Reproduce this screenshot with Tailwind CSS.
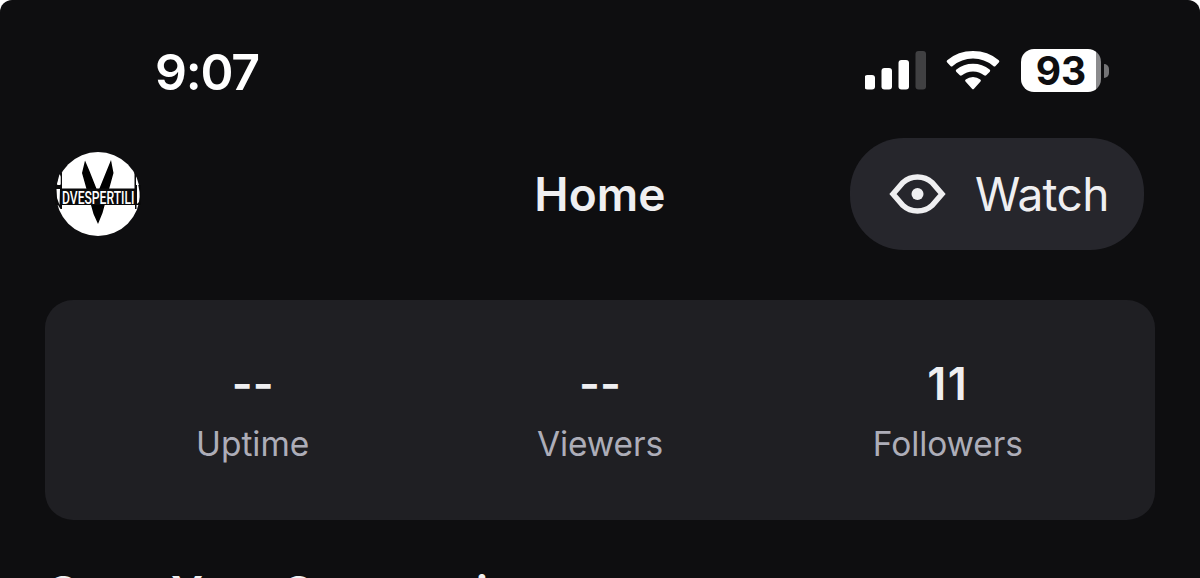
<!DOCTYPE html>
<html lang="en">
<head>
  <meta charset="UTF-8" />
  <meta name="viewport" content="width=device-width, initial-scale=1.0"/>
  <title>Home</title>
  <script src="https://cdn.jsdelivr.net/npm/@tailwindcss/browser@4"></script>
</head>
<body class="bg-white font-['Inter',sans-serif]">
  <div class="w-[1200px] h-[578px] overflow-hidden rounded-t-[12px] bg-[#0e0e10] text-[#efeff1]">

    <!-- Status bar -->
    <div class="h-[137px] pt-[42px] pl-[155px] pr-[91px] flex justify-between items-start">
      <span class="text-[50px] leading-[60px] font-semibold text-white tracking-[-1.2px]">9:07</span>
      <div class="flex items-start pt-[7px]">
        <svg class="w-[62px] h-[42px]" viewBox="0 0 62 42" fill="#fff">
          <rect x="-0.500" y="26" width="10.500" height="14.500" rx="3"/>
          <rect x="16.500" y="19" width="10.500" height="21.500" rx="3"/>
          <rect x="33.500" y="11" width="10.500" height="29.500" rx="3"/>
          <rect x="50.500" y="2" width="10.500" height="38.500" rx="3" fill="#404042"/>
        </svg>
        <svg class="w-[54px] h-[42px] ml-[19px]" viewBox="0 0 54 42" fill="#fff">
          <path d="M1.200 13.500Q0 12.300 1.200 11.200Q12 2 27 2Q42 2 52.800 11.200Q54 12.300 52.800 13.500L49.500 17Q48.500 18 47.300 17Q38.500 9.500 27 9.500Q15.500 9.500 6.700 17Q5.500 18 4.500 17Z"/>
          <path d="M10.200 22.700Q9.200 21.700 10.400 20.600Q17.500 14.800 27 14.800Q36.500 14.800 43.600 20.600Q44.800 21.700 43.800 22.700L40.200 26.300Q39.200 27.200 38 26.300Q33.500 22.500 27 22.500Q20.500 22.500 16 26.300Q14.800 27.200 13.800 26.300Z"/>
          <path d="M19.500 32.400Q18.500 31.400 19.700 30.400Q22.800 27.900 27 27.900Q31.200 27.900 34.300 30.400Q35.500 31.400 34.500 32.400L28 39.800Q27 40.800 26 39.800Z"/>
        </svg>
        <div class="flex items-center ml-[21px]">
          <div class="w-[80px] h-[43px] rounded-[13px] bg-linear-to-r from-white from-[93.500%] to-[#8b8b8d] to-[93.500%] text-[#0e0e10] text-[39px] leading-[43px] font-bold text-center">93</div>
          <div class="w-[5px] h-[14px] ml-[3px] rounded-r-full bg-[#747476]"></div>
        </div>
      </div>
    </div>

    <!-- Header -->
    <div class="h-[113px] pl-[55px] pr-[56px] grid grid-cols-[1fr_auto_1fr] items-center">
      <svg class="w-[86px] h-[86px]" viewBox="0 0 86 86">
        <circle cx="43" cy="43" r="42" fill="#fff"/>
        <path d="M30 9.500L27 22L38.500 63L43 73L47.500 62L58.500 22L56 9L51.500 20L43.800 39H42L34.500 20Z" fill="#000"/>
        <path d="M0 34H5.500V22H7V37.500H79.500V22H81V34H86V54H81.500V58H80V54H7V58H5.500L3 54H0Z" fill="#0a0a0b"/>
        <path d="M2 33L4.500 23L5.500 26V33ZM1.500 38H5L4.500 54L2 47ZM82 30Q86 41 84 51L82 53Z" fill="#fff"/>
        <text x="7" y="52.500" textLength="72.500" lengthAdjust="spacingAndGlyphs" font-family="Roboto, sans-serif" font-size="18.800" font-weight="500" fill="#fff">DVESPERTILI</text>
      </svg>
      <h1 class="text-[46px] leading-[56px] pl-px font-semibold tracking-[0.1px]">Home</h1>
      <button class="w-[294px] h-[112px] justify-self-end rounded-[54px] bg-[#26262c] flex items-center pl-[39px]">
        <svg class="w-[58px] h-[44px]" viewBox="0 0 58 44">
          <path d="M4 22L14 10.500Q20 5 28.500 5Q37 5 43 10.500L53 22L43 33.500Q37 39 28.500 39Q20 39 14 33.500Z" fill="none" stroke="#efeff1" stroke-width="5.500"/>
          <circle cx="28.500" cy="22" r="6" fill="#efeff1"/>
        </svg>
        <span class="ml-[28px] text-[46px] leading-[56px] font-normal tracking-[-0.6px]">Watch</span>
      </button>
    </div>

    <!-- Stats -->
    <div class="mt-[50px] mx-[45px] h-[220px] px-[34px] pt-[57px] rounded-[28px] bg-[#1f1f23] grid grid-cols-3 text-center">
      <div>
        <div class="text-[45px] leading-[54px] font-semibold">--</div>
        <div class="mt-[12px] text-[33.5px] leading-[42px] text-[#adadb8]">Uptime</div>
      </div>
      <div>
        <div class="text-[45px] leading-[54px] font-semibold">--</div>
        <div class="mt-[12px] text-[33.5px] leading-[42px] tracking-[-0.1px] text-[#adadb8]">Viewers</div>
      </div>
      <div>
        <div class="pl-px text-[45px] leading-[54px] font-semibold tracking-[1.5px]">11</div>
        <div class="mt-[12px] pl-px text-[33.5px] leading-[42px] tracking-[-0.1px] text-[#adadb8]">Followers</div>
      </div>
    </div>

    <h2 class="mt-[45px] ml-[46px] text-[45px] leading-[56px] font-semibold tracking-[-0.3px] whitespace-nowrap">Grow Your Community</h2>
  </div>
</body>
</html>
